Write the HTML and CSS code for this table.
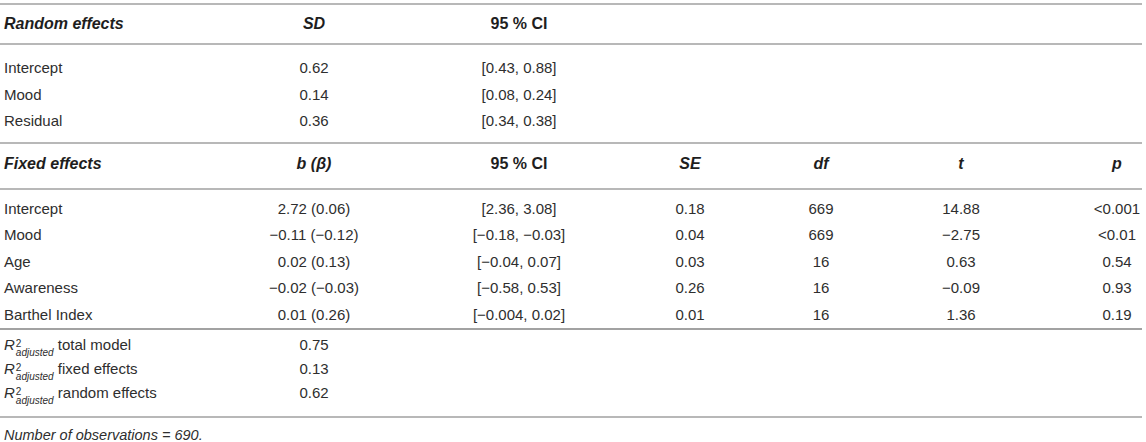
FILE: index.html
```html
<!DOCTYPE html>
<html lang="en">
<head>
<meta charset="UTF-8">
<meta name="viewport" content="width=device-width, initial-scale=1.0">
<title>Mixed model results</title>
<link rel="stylesheet" href="styles.css">
</head>
<body>
<table class="results">
  <colgroup>
    <col class="c-label">
    <col class="c-b">
    <col class="c-ci">
    <col class="c-se">
    <col class="c-df">
    <col class="c-t">
    <col class="c-p">
  </colgroup>

  <!-- random effects -->
  <tbody class="section random">
    <tr class="head">
      <th class="label"><i>Random effects</i></th>
      <th><i>SD</i></th>
      <th>95 % CI</th>
      <th></th>
      <th></th>
      <th></th>
      <th></th>
    </tr>
    <tr class="first">
      <td class="label">Intercept</td>
      <td>0.62</td>
      <td>[0.43, 0.88]</td>
      <td></td><td></td><td></td><td></td>
    </tr>
    <tr>
      <td class="label">Mood</td>
      <td>0.14</td>
      <td>[0.08, 0.24]</td>
      <td></td><td></td><td></td><td></td>
    </tr>
    <tr class="last">
      <td class="label">Residual</td>
      <td>0.36</td>
      <td>[0.34, 0.38]</td>
      <td></td><td></td><td></td><td></td>
    </tr>
  </tbody>

  <!-- fixed effects -->
  <tbody class="section fixed">
    <tr class="head">
      <th class="label"><i>Fixed effects</i></th>
      <th><i>b (β)</i></th>
      <th>95 % CI</th>
      <th><i>SE</i></th>
      <th><i>df</i></th>
      <th><i>t</i></th>
      <th class="p"><i>p</i></th>
    </tr>
    <tr class="first">
      <td class="label">Intercept</td>
      <td>2.72 (0.06)</td>
      <td>[2.36, 3.08]</td>
      <td>0.18</td>
      <td>669</td>
      <td>14.88</td>
      <td class="p">&lt;0.001</td>
    </tr>
    <tr>
      <td class="label">Mood</td>
      <td>−0.11 (−0.12)</td>
      <td>[−0.18, −0.03]</td>
      <td>0.04</td>
      <td>669</td>
      <td>−2.75</td>
      <td class="p">&lt;0.01</td>
    </tr>
    <tr>
      <td class="label">Age</td>
      <td>0.02 (0.13)</td>
      <td>[−0.04, 0.07]</td>
      <td>0.03</td>
      <td>16</td>
      <td>0.63</td>
      <td class="p">0.54</td>
    </tr>
    <tr>
      <td class="label">Awareness</td>
      <td>−0.02 (−0.03)</td>
      <td>[−0.58, 0.53]</td>
      <td>0.26</td>
      <td>16</td>
      <td>−0.09</td>
      <td class="p">0.93</td>
    </tr>
    <tr class="rule">
      <td class="label">Barthel Index</td>
      <td>0.01 (0.26)</td>
      <td>[−0.004, 0.02]</td>
      <td>0.01</td>
      <td>16</td>
      <td>1.36</td>
      <td class="p">0.19</td>
    </tr>
  </tbody>

  <!-- model fit -->
  <tbody class="section fit">
    <tr class="first">
      <td class="label"><i>R</i><span class="supsub"><span>2</span><span><i>adjusted</i></span></span> total model</td>
      <td>0.75</td>
      <td></td><td></td><td></td><td></td><td></td>
    </tr>
    <tr>
      <td class="label"><i>R</i><span class="supsub"><span>2</span><span><i>adjusted</i></span></span> fixed effects</td>
      <td>0.13</td>
      <td></td><td></td><td></td><td></td><td></td>
    </tr>
    <tr class="last">
      <td class="label"><i>R</i><span class="supsub"><span>2</span><span><i>adjusted</i></span></span> random effects</td>
      <td>0.62</td>
      <td></td><td></td><td></td><td></td><td></td>
    </tr>
  </tbody>
</table>

<p class="note"><i>Number of observations = 690.</i></p>
</body>
</html>
```

FILE: styles.css
```css
body {
  margin: 0;
  background-color: #fff;
  color: #2e2e2e;
  font-family: "Liberation Sans", Arial, Helvetica, sans-serif;
  font-size: 15px;
}

.results {
  width: 1142px;
  margin-top: 3px;
  border-collapse: separate;
  border-spacing: 0;
  table-layout: fixed;
}

.c-label { width: 230px; }
.c-b { width: 168px; }
.c-ci { width: 242px; }
.c-se { width: 100px; }
.c-df { width: 162px; }
.c-t { width: 118px; }
.c-p { width: 122px; }

th, td {
  padding: 0;
  text-align: center;
  vertical-align: middle;
  white-space: nowrap;
  line-height: 26.5px;
}

th {
  font-size: 16px;
  font-weight: bold;
  color: #1e1e1e;
}

.label {
  text-align: left;
  padding-left: 4px;
}

.p {
  padding-left: 72px;
}

/* header rows */
.head th {
  border-top: 2px solid #b8b8b8;
  border-bottom: 2px solid #b8b8b8;
}

.random .head th {
  line-height: 38px;
}

.fixed .head th {
  line-height: 40px;
  padding-bottom: 4px;
}

.random .first td {
  padding-top: 10px;
}

.random .last td {
  padding-bottom: 7.5px;
}

.fixed .first td {
  padding-top: 5.5px;
}

.fixed .rule td {
  border-bottom: 2px solid #a2a2a2;
}

/* model fit rows */
.fit td {
  line-height: 24px;
}

.fit .first td {
  padding-top: 3px;
}

.fit .last td {
  padding-bottom: 11px;
  border-bottom: 2px solid #b8b8b8;
}

.supsub {
  display: inline-block;
  vertical-align: -6px;
  margin-left: 1px;
  font-size: 10px;
  line-height: 9px;
  text-align: left;
}

.supsub span {
  display: block;
}

.note {
  margin: 8px 0 0 4px;
  font-size: 14.5px;
  line-height: 18px;
}
```
